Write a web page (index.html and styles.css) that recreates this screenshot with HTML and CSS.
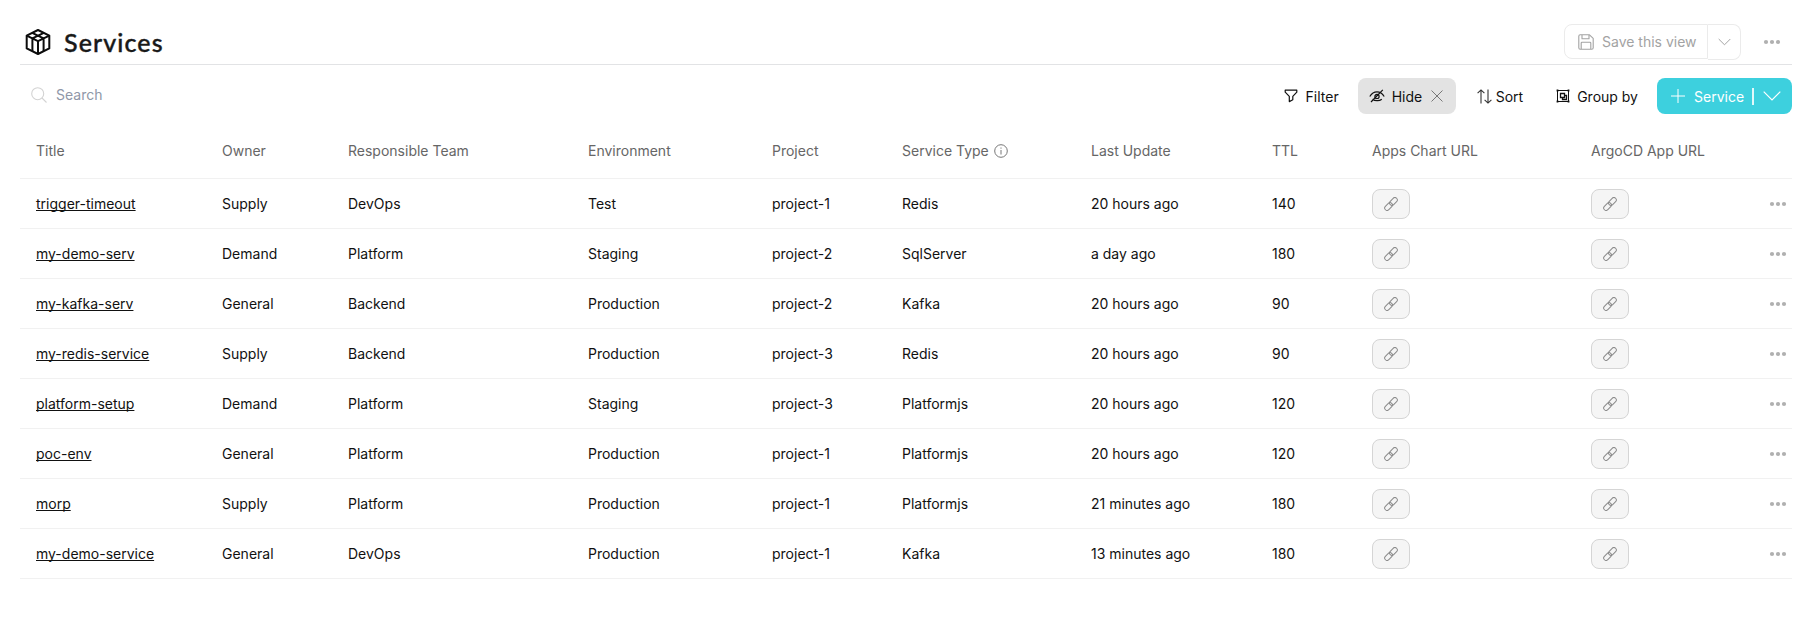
FILE: index.html
```html
<!DOCTYPE html>
<html lang="en">
<head>
<meta charset="utf-8">
<title>Services</title>
<link rel="stylesheet" href="styles.css">
</head>
<body>
<svg class="defs" width="0" height="0" aria-hidden="true">
  <symbol id="link" viewBox="0 0 14 14"><g fill="none" stroke="#8b8b8b" stroke-width="1" transform="rotate(-46 7 7)"><rect x="-1" y="4.6" width="9" height="4.8" rx="2.4"/><rect x="6" y="4.6" width="9" height="4.8" rx="2.4"/></g></symbol>
  <symbol id="dots" viewBox="0 0 18 6"><g fill="#b0b0b0"><circle cx="3" cy="3" r="2.1"/><circle cx="9" cy="3" r="2.1"/><circle cx="15" cy="3" r="2.1"/></g></symbol>
</svg>
<main class="page">
  <header class="header">
    <svg class="logo" width="26" height="26" viewBox="0 0 26 26" fill="none" stroke="#0c0c0c" stroke-width="2" stroke-linejoin="round"><path d="M13 1 24.3 6.6V19.4L13 25 1.7 19.4V6.6Z"/><path d="M1.7 6.6 13 12.2 24.3 6.6M7.2 3.8 18.6 9.3V22M18.8 3.8 7.4 9.3V22M13 12.2V25"/></svg>
    <h1 class="title">Services</h1>
    <div class="save">
      <button class="save-main"><svg width="16" height="16" viewBox="0 0 16 16" fill="none" stroke="#a3a3a3" stroke-width="1.1" stroke-linejoin="round"><path d="M.8 2.2Q.8.8 2.2.8H11.5L15.2 4.3V13.8Q15.2 15.2 13.8 15.2H2.2Q.8 15.2.8 13.8Z"/><path d="M4 1V4.8H11V1M3.2 15V9Q3.2 8.2 4 8.2H12Q12.8 8.2 12.8 9V15"/></svg>Save this view</button>
      <button class="save-more"><svg width="13" height="8" viewBox="0 0 13 8" fill="none" stroke="#a3a3a3" stroke-width="1"><path d="M.7 1 6.5 6.8 12.3 1"/></svg></button>
    </div>
    <svg class="head-dots" width="18" height="6"><use href="#dots"/></svg>
  </header>
  <div class="toolbar">
    <div class="search"><svg width="16" height="16" viewBox="0 0 16 16" fill="none" stroke="#d3d3d3" stroke-width="1.1"><circle cx="6.7" cy="6.7" r="6"/><path d="M11 11 15.5 15.5"/></svg>Search</div>
    <button class="tool filter"><svg width="14" height="14" viewBox="0 0 14 14" fill="none" stroke="#111" stroke-width="1.2" stroke-linejoin="round"><path d="M1.2 1.2H12.8V3.2L8.8 7.3V10.8L5.3 12.6V7.3L1.2 3.2Z"/></svg><span>Filter</span></button>
    <button class="tool hide"><svg width="16" height="14" viewBox="0 0 16 14" fill="none" stroke="#111" stroke-width="1.2"><path d="M.8 7.5C4.5 1.3 11.5 1.3 15.2 7.5M3.5 10.2C6 12.2 10.5 12 12.8 10.2M2 13 13.8.8"/><circle cx="8" cy="7.4" r="2.1"/></svg><span>Hide</span><svg class="close" width="12" height="12" viewBox="0 0 12 12" stroke="#777" stroke-width="1"><path d="M.5.5 11.5 11.5M11.5.5.5 11.5"/></svg></button>
    <button class="tool sort"><svg width="15" height="15" viewBox="0 0 15 15" fill="none" stroke="#333" stroke-width="1.1"><path d="M4 14.5V1M.6 4.2 4 .9 7.4 4.2M11 .5V14M7.6 10.8 11 14.1 14.4 10.8"/></svg><span>Sort</span></button>
    <button class="tool group"><svg width="14" height="14" viewBox="0 0 14 14" fill="none" stroke="#111"><path d="M1.5 1.5H12.5V12.5H1.5Z" stroke-width="1"/><path d="M4.5 4.5H8.5V8.5H4.5ZM9 6.5H10.5V10.5H6.5V9" stroke-width="1.3"/><path d="M.6 1.5H2.4M11.6 1.5H13.4M.6 12.5H2.4M11.6 12.5H13.4" stroke-width="1.8"/></svg><span>Group by</span></button>
    <button class="add"><svg width="14" height="14" viewBox="0 0 14 14" stroke="#fff" stroke-width="1"><path d="M7 0V14M0 7H14"/></svg><span>Service</span><i class="bar"></i><svg width="18" height="10" viewBox="0 0 18 10" fill="none" stroke="#fff" stroke-width="1.2"><path d="M.7.7 9 9 17.3.7"/></svg></button>
  </div>
  <section class="table" id="table">
    <div class="row head"><span>Title</span><span>Owner</span><span>Responsible Team</span><span>Environment</span><span>Project</span><span class="type">Service Type<svg width="14" height="14" viewBox="0 0 14 14" fill="none" stroke="#777" stroke-width="1"><circle cx="7" cy="7" r="6.3"/><path d="M7 6V10.5M7 3.5V4.7"/></svg></span><span>Last Update</span><span>TTL</span><span>Apps Chart URL</span><span>ArgoCD App URL</span><span></span></div>
  </section>
</main>
<script src="table.js"></script>
</body>
</html>
```
FILE: styles.css
```css
* { box-sizing: border-box; }
body { margin: 0; background: #fff; color: #111; font: 14px/20px Inter, "Liberation Sans", sans-serif; }
button { font: inherit; color: inherit; background: none; border: 0; padding: 0; display: flex; align-items: center; }
svg { display: block; flex: none; }
.defs { position: absolute; }
.page { padding: 20px 21px 0 20px; }
.header { height: 45px; display: flex; align-items: center; border-bottom: 1px solid #e2e3e5; padding: 0 11px 0 5px; }
.logo { margin-top: -1px; }
.title { margin: -1px auto 0 13px; font: 500 25px/32px Lato, Inter, sans-serif; letter-spacing: 1.1px; color: #191919; -webkit-text-stroke: .4px #191919; }
.save { display: flex; color: #a3a3a3; height: 36px; margin-right: 22px; margin-top: -1px; }
.save-main { width: 144px; height: 35px; border: 1px solid #ebebeb; border-radius: 8px 0 0 8px; padding: 1px 0 0 13px; gap: 8px; }
.save-more { width: 33px; height: 36px; border: 1px solid #ebebeb; border-left: 0; border-radius: 0 8px 8px 0; justify-content: center; }
.head-dots { margin-top: -1px; }
.toolbar { height: 62px; display: flex; align-items: center; }
.search { display: flex; align-items: center; gap: 9px; margin: -2px auto 0 11px; color: #8f97a8; }
.tool { height: 36px; gap: 8px; }
.tool span, .add span { padding-top: 1px; }
.filter { margin-right: 19px; }
.hide { width: 98px; padding-left: 11px; gap: 7px; background: #e3e3e3; border-radius: 8px; margin-right: 21px; }
.close { margin-left: 2px; }
.sort { gap: 4px; margin-right: 33px; }
.group { gap: 7px; margin-right: 19px; }
.add { width: 135px; height: 36px; border-radius: 8px; background: #3dd0de; color: #fff; padding-left: 14px; gap: 9px; }
.bar { width: 2px; height: 17px; margin-left: -1px; background: #fff; opacity: .85; }
.row { display: grid; grid-template-columns: 186px 126px 240px 184px 130px 189px 181px 100px 219px 178px 1fr; height: 50px; padding-left: 16px; align-items: center; border-bottom: 1px solid #f1f1f1; }
.row.head { height: 52px; color: #666; padding-bottom: 3px; }
.type { display: flex; align-items: center; gap: 5px; }
.name { color: #111; text-decoration: underline; text-underline-offset: 1px; text-decoration-skip-ink: none; }
.chip { width: 38px; height: 30px; border: 1px solid #d5d5d5; border-radius: 8px; background: #f5f5f5; display: flex; align-items: center; justify-content: center; }
```
FILE: table.js
```
const rows = [
  ["trigger-timeout", "Supply", "DevOps", "Test", "project-1", "Redis", "20 hours ago", "140"],
  ["my-demo-serv", "Demand", "Platform", "Staging", "project-2", "SqlServer", "a day ago", "180"],
  ["my-kafka-serv", "General", "Backend", "Production", "project-2", "Kafka", "20 hours ago", "90"],
  ["my-redis-service", "Supply", "Backend", "Production", "project-3", "Redis", "20 hours ago", "90"],
  ["platform-setup", "Demand", "Platform", "Staging", "project-3", "Platformjs", "20 hours ago", "120"],
  ["poc-env", "General", "Platform", "Production", "project-1", "Platformjs", "20 hours ago", "120"],
  ["morp", "Supply", "Platform", "Production", "project-1", "Platformjs", "21 minutes ago", "180"],
  ["my-demo-service", "General", "DevOps", "Production", "project-1", "Kafka", "13 minutes ago", "180"]
];
const chip = '<span class="chip"><svg width="14" height="14"><use href="#link"/></svg></span>';
const dots = '<svg width="18" height="6"><use href="#dots"/></svg>';
document.getElementById("table").insertAdjacentHTML("beforeend", rows.map(([name, ...cells]) =>
  `<div class="row"><span><a class="name">${name}</a></span>${cells.map(c => `<span>${c}</span>`).join("")}${chip}${chip}${dots}</div>`
).join(""));
```
